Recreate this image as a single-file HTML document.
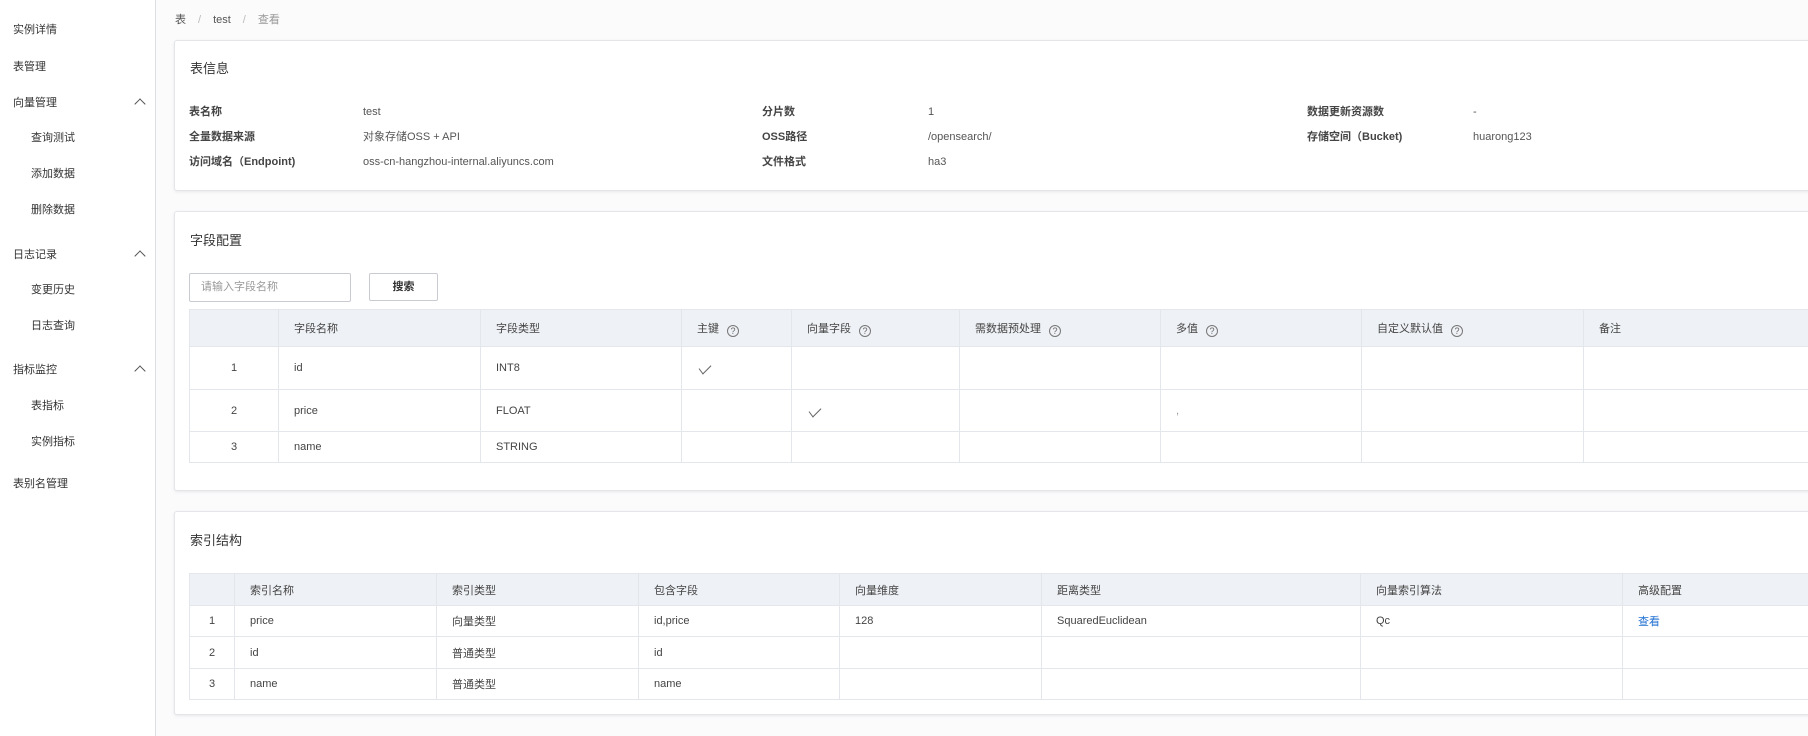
<!DOCTYPE html>
<html><head><meta charset="utf-8">
<style>
*{margin:0;padding:0;box-sizing:border-box}
html,body{width:1808px;height:736px;overflow:hidden;background:#fbfbfc;font-family:"Liberation Sans","Noto Sans CJK SC",sans-serif;font-size:11px;color:#333}
.abs{position:absolute;white-space:nowrap}
.side{position:absolute;left:0;top:0;width:156px;height:736px;background:#fff;border-right:1px solid #dcdfe4}
.si{position:absolute;left:13px;font-size:11px;color:#333;line-height:16px}
.si.sub{left:31px}
.chev{position:absolute;left:136px;width:8px;height:8px;border-left:1.3px solid #555;border-top:1.3px solid #555;transform:rotate(45deg)}
.card{position:absolute;left:174px;width:1660px;background:#fff;border:1px solid #e3e5e8;border-radius:3px;box-shadow:0 1px 3px rgba(0,0,0,.08)}
.ct{position:absolute;left:15px;font-size:13px;color:#333}
.lbl{position:absolute;font-weight:600;color:#444;line-height:16px}
.val{position:absolute;color:#555;line-height:16px}
table{position:absolute;border-collapse:collapse;table-layout:fixed}
td,th{border:1px solid #e3e6ea;font-weight:normal;text-align:left;padding:0 0 0 15px;color:#444;font-size:11px;white-space:nowrap;overflow:hidden}
th{background:#eef1f5;color:#444}
td.n,th.n{text-align:center;padding:0}
.q{display:inline-block;width:12px;height:12px;border:1px solid #777;border-radius:50%;font-size:9px;line-height:10px;text-align:center;color:#666;margin-left:8px;vertical-align:-2px}
.ck{display:inline-block;width:12px;height:7px;border-left:1.2px solid #666;border-bottom:1.2px solid #666;transform:rotate(-45deg) skewX(-8deg);margin-left:2px}
a{color:#1f6fd1;text-decoration:none}
</style></head><body>
<div class="side">
<div class="si" style="top:22px">实例详情</div>
<div class="si" style="top:59px">表管理</div>
<div class="si" style="top:95px">向量管理</div><div class="chev" style="top:100px"></div>
<div class="si sub" style="top:130px">查询测试</div>
<div class="si sub" style="top:166px">添加数据</div>
<div class="si sub" style="top:202px">删除数据</div>
<div class="si" style="top:247px">日志记录</div><div class="chev" style="top:252px"></div>
<div class="si sub" style="top:282px">变更历史</div>
<div class="si sub" style="top:318px">日志查询</div>
<div class="si" style="top:362px">指标监控</div><div class="chev" style="top:367px"></div>
<div class="si sub" style="top:398px">表指标</div>
<div class="si sub" style="top:434px">实例指标</div>
<div class="si" style="top:476px">表别名管理</div>
</div>

<div class="abs" style="left:175px;top:11px;color:#555">表<span style="color:#bbb;margin:0 12px">/</span>test<span style="color:#bbb;margin:0 12px">/</span><span style="color:#999">查看</span></div>

<div class="card" style="top:40px;height:151px">
<div class="ct" style="top:17px">表信息</div>
<div class="lbl" style="left:14px;top:63px">表名称</div><div class="val" style="left:188px;top:63px">test</div>
<div class="lbl" style="left:14px;top:88px">全量数据来源</div><div class="val" style="left:188px;top:88px">对象存储OSS + API</div>
<div class="lbl" style="left:14px;top:113px">访问域名（Endpoint)</div><div class="val" style="left:188px;top:113px">oss-cn-hangzhou-internal.aliyuncs.com</div>
<div class="lbl" style="left:587px;top:63px">分片数</div><div class="val" style="left:753px;top:63px">1</div>
<div class="lbl" style="left:587px;top:88px">OSS路径</div><div class="val" style="left:753px;top:88px">/opensearch/</div>
<div class="lbl" style="left:587px;top:113px">文件格式</div><div class="val" style="left:753px;top:113px">ha3</div>
<div class="lbl" style="left:1132px;top:63px">数据更新资源数</div><div class="val" style="left:1298px;top:63px">-</div>
<div class="lbl" style="left:1132px;top:88px">存储空间（Bucket)</div><div class="val" style="left:1298px;top:88px">huarong123</div>
</div>

<div class="card" style="top:211px;height:280px">
<div class="ct" style="top:18px">字段配置</div>
<div class="abs" style="left:14px;top:61px;width:162px;height:29px;border:1px solid #c8ccd2;border-radius:2px;color:#999;padding:0 0 0 11px;line-height:27px">请输入字段名称</div>
<div class="abs" style="left:194px;top:61px;width:69px;height:28px;border:1px solid #c8ccd2;border-radius:2px;color:#333;font-weight:600;text-align:center;line-height:26px">搜索</div>
</div>
<table style="left:189px;top:309px;width:1700px">
<colgroup><col style="width:89px"><col style="width:202px"><col style="width:201px"><col style="width:110px"><col style="width:168px"><col style="width:201px"><col style="width:201px"><col style="width:222px"><col style="width:306px"></colgroup>
<tr style="height:37px"><th></th><th>字段名称</th><th>字段类型</th><th>主键<span class="q">?</span></th><th>向量字段<span class="q">?</span></th><th>需数据预处理<span class="q">?</span></th><th>多值<span class="q">?</span></th><th>自定义默认值<span class="q">?</span></th><th>备注</th></tr>
<tr style="height:43px"><td class="n">1</td><td>id</td><td>INT8</td><td><span class="ck"></span></td><td></td><td></td><td></td><td></td><td></td></tr>
<tr style="height:42px"><td class="n">2</td><td>price</td><td>FLOAT</td><td></td><td><span class="ck"></span></td><td></td><td style="color:#999">,</td><td></td><td></td></tr>
<tr style="height:31px"><td class="n">3</td><td>name</td><td>STRING</td><td></td><td></td><td></td><td></td><td></td><td></td></tr>
</table>

<div class="card" style="top:511px;height:204px">
<div class="ct" style="top:18px">索引结构</div>
</div>
<table style="left:189px;top:573px;width:1700px">
<colgroup><col style="width:45px"><col style="width:202px"><col style="width:202px"><col style="width:201px"><col style="width:202px"><col style="width:319px"><col style="width:262px"><col style="width:267px"></colgroup>
<tr style="height:32px"><th class="n"></th><th>索引名称</th><th>索引类型</th><th>包含字段</th><th>向量维度</th><th>距离类型</th><th>向量索引算法</th><th>高级配置</th></tr>
<tr style="height:31px"><td class="n">1</td><td>price</td><td>向量类型</td><td>id,price</td><td>128</td><td>SquaredEuclidean</td><td>Qc</td><td><a>查看</a></td></tr>
<tr style="height:32px"><td class="n">2</td><td>id</td><td>普通类型</td><td>id</td><td></td><td></td><td></td><td></td></tr>
<tr style="height:31px"><td class="n">3</td><td>name</td><td>普通类型</td><td>name</td><td></td><td></td><td></td><td></td></tr>
</table>
</body></html>
